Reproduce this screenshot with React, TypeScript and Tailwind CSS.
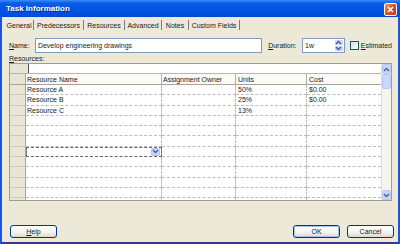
import React from 'react';

type Row = { name: string; owner: string; units: string; cost: string };

const rows: Row[] = [
  { name: 'Resource A', owner: '', units: '50%', cost: '$0.00' },
  { name: 'Resource B', owner: '', units: '25%', cost: '$0.00' },
  { name: 'Resource C', owner: '', units: '13%', cost: '' },
  ...Array.from({ length: 9 }, () => ({ name: '', owner: '', units: '', cost: '' })),
];

const DROPDOWN_ROW = 6;

const tabs = [
  { label: 'General', w: 'w-[29px]' },
  { label: 'Predecessors', w: 'w-[50px]' },
  { label: 'Resources', w: 'w-[41px]' },
  { label: 'Advanced', w: 'w-[37px]' },
  { label: 'Notes', w: 'w-[27px]' },
  { label: 'Custom Fields', w: 'w-[51px]' },
];

function Chevron({ up = false }: { up?: boolean }) {
  return (
    <svg width="7" height="5" viewBox="0 0 7 5">
      <polyline
        points={up ? '1,4 3.5,1.5 6,4' : '1,1 3.5,3.5 6,1'}
        fill="none"
        stroke="#4d6185"
        strokeWidth="1.4"
      />
    </svg>
  );
}

function XPButton({ children, isDefault = false }: { children: React.ReactNode; isDefault?: boolean }) {
  return (
    <div className="w-[47px] h-[13px] rounded-[3px] border border-[#003c74] bg-[linear-gradient(to_bottom,#ffffff,#f3f2ec_60%,#dcd8cc)]">
      <div
        className={
          'w-full h-full rounded-[2px] flex items-center justify-center leading-none ' +
          (isDefault ? 'border border-[#a9bdf0]' : '')
        }
      >
        {children}
      </div>
    </div>
  );
}

export default function App() {
  return (
    <div className="w-[400px] h-[244px] flex flex-col overflow-hidden bg-[#0a4ad8] font-['Liberation_Sans',Arial,sans-serif] text-[7px] text-[#1a1a1a]">
      {/* title bar */}
      <div className="h-[17px] shrink-0 flex items-center justify-between pl-[6px] pr-[3px] bg-[linear-gradient(to_bottom,#3d8ff8_0%,#0b5ce8_18%,#0055e4_55%,#004bd4_100%)]">
        <span className="text-white font-bold text-[8px] leading-none [text-shadow:1px_1px_0_#0b2a8a]">
          Task Information
        </span>
        <div className="w-[13px] h-[13px] mt-[2px] rounded-[2px] border border-white bg-[linear-gradient(135deg,#ee9a7c,#dc4d26_50%,#c23a12)] flex items-center justify-center">
          <svg width="7" height="7" viewBox="0 0 7 7">
            <path d="M1 1 L6 6 M6 1 L1 6" stroke="white" strokeWidth="1.6" />
          </svg>
        </div>
      </div>

      {/* body */}
      <div className="flex-1 flex flex-col bg-[#ece9d8] border-x-2 border-b-2 border-x-[#1a55e0] border-b-[#2a3e8c]">
        {/* tabs */}
        <div className="h-[14px] shrink-0 flex items-end pl-[3px] pb-[1px]">
          {tabs.map((t) => (
            <div
              key={t.label}
              className={t.w + ' h-[10px] flex items-center justify-center border-r border-[#7c7c7c] leading-none'}
            >
              {t.label}
            </div>
          ))}
        </div>

        <div className="flex-1 flex flex-col pl-[7px] pr-[6px] pt-[7px]">
          {/* name row */}
          <div className="h-[15px] shrink-0 flex items-center">
            <div className="w-[26px] leading-none">
              <span className="underline">N</span>ame:
            </div>
            <div className="w-[228px] h-full border border-[#7f9db9] bg-white flex items-center pl-[2px] leading-none">
              Develop engineering drawings
            </div>
            <div className="ml-[6px] w-[34px] leading-none">
              <span className="underline">D</span>uration:
            </div>
            <div className="w-[43px] h-full flex border border-[#7f9db9] bg-white">
              <div className="flex-1 flex items-center pl-[2px] leading-none">1w</div>
              <div className="w-[10px] flex flex-col gap-px p-px">
                <div className="flex-1 rounded-[1px] bg-[#c6d5fb] flex items-center justify-center">
                  <Chevron up />
                </div>
                <div className="flex-1 rounded-[1px] bg-[#c6d5fb] flex items-center justify-center">
                  <Chevron />
                </div>
              </div>
            </div>
            <div className="ml-[5px] w-[9px] h-[9px] border border-[#1c5180] bg-[linear-gradient(135deg,#dcdcd5,#ffffff)]" />
            <div className="ml-[2px] leading-none">
              <span className="underline">E</span>stimated
            </div>
          </div>

          {/* resources label */}
          <div className="h-[10px] shrink-0 flex items-end pb-[1px] leading-none">
            <span>
              <span className="underline">R</span>esources:
            </span>
          </div>

          {/* grid */}
          <div className="h-[138px] shrink-0 flex border border-[#a09e92] bg-white">
            <div className="flex-1 flex flex-col overflow-hidden">
              {/* edit bar */}
              <div className="h-[10px] shrink-0 flex border-b border-[#b9b6a8]">
                <div className="w-[18px] bg-[#e8e5d6]" />
                <div className="flex-1 bg-white border-l border-[#555555]" />
              </div>
              {/* header */}
              <div className="h-[11px] shrink-0 flex border-b border-[#a7a493] leading-none">
                <div className="w-[16px] bg-[#e8e5d6] border-r border-[#a7a493]" />
                <div className="w-[136px] flex items-center pl-[1px] border-r border-[#b5b2a3] bg-[#fbfaf6]">Resource Name</div>
                <div className="w-[74px] flex items-center pl-[1px] border-r border-[#b5b2a3] bg-[#fbfaf6]">Assignment Owner</div>
                <div className="w-[71px] flex items-center pl-[2px] border-r border-[#b5b2a3] bg-[#fbfaf6]">Units</div>
                <div className="w-[74px] flex items-center pl-[2px] bg-[#fbfaf6]">Cost</div>
              </div>
              {/* data rows */}
              {rows.map((r, i) => (
                <div key={i} className="h-[10.3px] shrink-0 flex leading-none">
                  <div className="w-[16px] bg-[#e8e5d6] border-r border-b border-r-[#a7a493] border-b-[#cdc9b8]" />
                  {i === DROPDOWN_ROW ? (
                    <div className="w-[136px] flex items-center justify-end pr-px border border-dashed border-[#666666]">
                      <div className="w-[9px] h-[8px] rounded-[2px] bg-[#c6d5fb] border border-[#b0c4f4] flex items-center justify-center">
                        <Chevron />
                      </div>
                    </div>
                  ) : (
                    <div className="w-[136px] flex items-center pl-[1px] border-r border-b border-dashed border-[#bcbcbc]">
                      {r.name}
                    </div>
                  )}
                  <div className="w-[74px] flex items-center pl-[1px] border-r border-b border-dashed border-[#bcbcbc]">
                    {r.owner}
                  </div>
                  <div className="w-[71px] flex items-center pl-[2px] border-r border-b border-dashed border-[#bcbcbc]">
                    {r.units}
                  </div>
                  <div className="w-[74px] flex items-center pl-[2px] border-b border-dashed border-[#bcbcbc]">
                    {r.cost}
                  </div>
                </div>
              ))}
            </div>
            {/* scrollbar */}
            <div className="w-[10px] shrink-0 flex flex-col bg-[#f5f4ef] border-l border-[#e2e0d6]">
              <div className="h-[10px] rounded-[2px] bg-[#c5d5fc] border border-[#b4c7f6] flex items-center justify-center">
                <Chevron up />
              </div>
              <div className="h-[15px] rounded-[2px] bg-[#c9d8fc] border border-[#b4c7f6]" />
              <div className="flex-1" />
              <div className="h-[10px] rounded-[2px] bg-[#c5d5fc] border border-[#b4c7f6] flex items-center justify-center">
                <Chevron />
              </div>
            </div>
          </div>

          {/* buttons */}
          <div className="mt-[24px] flex items-center pl-[1px] -mr-[2px]">
            <XPButton>
              <span>
                <span className="underline">H</span>elp
              </span>
            </XPButton>
            <div className="flex-1" />
            <XPButton isDefault>OK</XPButton>
            <div className="w-[7px]" />
            <XPButton>Cancel</XPButton>
          </div>
        </div>
      </div>
    </div>
  );
}
